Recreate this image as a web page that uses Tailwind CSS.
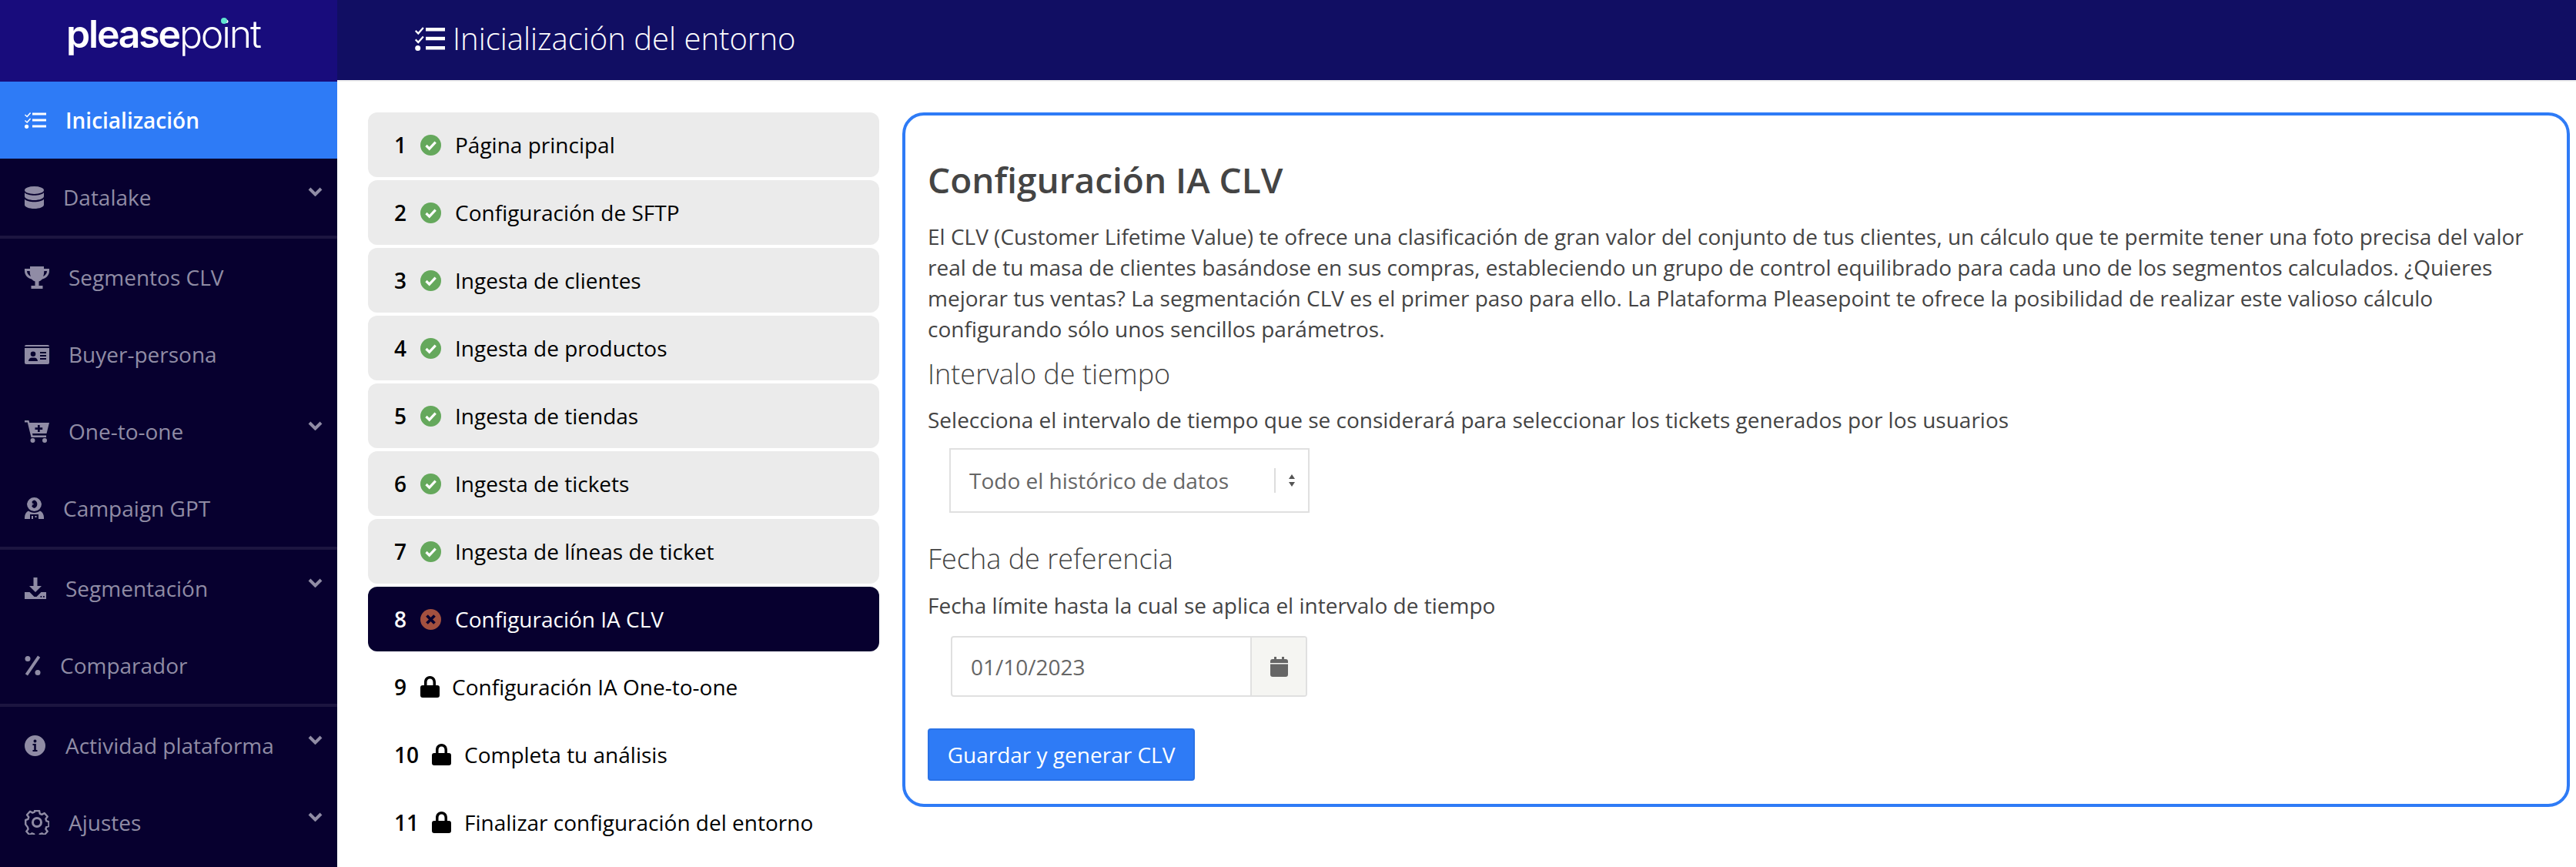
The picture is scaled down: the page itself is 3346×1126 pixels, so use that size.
<!DOCTYPE html>
<html lang="es">
<head>
<meta charset="utf-8">
<script src="https://cdn.jsdelivr.net/npm/@tailwindcss/browser@4"></script>
<title>Inicialización del entorno</title>
</head>
<body class="bg-white font-['Open_Sans',sans-serif]">
<div class="flex h-[1126px] w-[3346px] overflow-hidden">
  <!-- Sidebar -->
  <aside class="flex w-[438px] shrink-0 flex-col bg-[#07002f] text-[28px] leading-[40px] text-[#908ca5]">
    <div class="flex h-[106px] shrink-0 items-start bg-[#180c7c] pl-[86px] pt-[14px]">
      <div class="relative font-['Inter',sans-serif] text-[50px] leading-[60px] tracking-[-2.2px] text-white">
        <span class="font-semibold">please</span><span class="font-light">point</span>
        <span class="absolute left-[201px] top-[9px] h-[8px] w-[8px] rounded-full bg-[#5fe3cf]"></span>
      </div>
    </div>
    <a class="flex h-[100px] shrink-0 items-center gap-[25px] bg-[#2e7bf6] pl-[32px] font-semibold text-white">
      <svg class="w-[28px] h-[22px]" viewBox="0 0 28 22" fill="#fff"><path d="M1 3.500l2 2 4-4.500 1.200 1L3.200 7.600 0 4.600zM1 11l2 2 4-4.500 1.200 1L3.200 15 0 12z"/><circle cx="2.600" cy="19.300" r="2.600"/><rect x="10" y="1.500" width="18" height="3"/><rect x="10" y="9.500" width="18" height="3"/><rect x="10" y="17.500" width="18" height="3"/></svg>
      <span>Inicialización</span>
    </a>
    <a class="flex h-[100px] shrink-0 items-center gap-[25px] pl-[32px] pr-[19px]">
      <svg class="h-[29px] w-[25px]" viewBox="0 0 25 29" fill="currentColor"><ellipse cx="12.500" cy="5" rx="12.500" ry="5"/><path d="M0 8c2 2.500 7 3.800 12.500 3.800S23 10.500 25 8v5c0 2.700-5.600 5-12.500 5S0 15.700 0 13zM0 16.500c2 2.500 7 3.800 12.500 3.800S23 19 25 16.500V24c0 2.800-5.600 5-12.500 5S0 26.800 0 24z"/></svg>
      <span>Datalake</span>
      <svg class="ml-auto mb-[14px] h-[12px] w-[19px]" viewBox="0 0 19 12" fill="none" stroke="currentColor" stroke-width="4"><path d="M2 2l7.500 7.500L17 2"/></svg>
    </a>
    <div class="h-[4px] shrink-0 bg-[#1c1540]"></div>
    <a class="flex h-[100px] shrink-0 items-center gap-[25px] pl-[32px]">
      <svg class="h-[29px] w-[32px]" viewBox="0 0 32 29" fill="currentColor"><path d="M7 0h18v3h7v3c0 5.500-4.300 9.500-9 10.500-1.500 1.500-3 2.500-4.500 3V25h5v4H8.500v-4h5v-5.500c-1.500-.5-3-1.500-4.500-3C4.300 15.500 0 11.500 0 6V3h7zM3 6c0 3 2 5.500 5 7-1-2-1.200-4.500-1.300-7zM29 6h-3.700c-.1 2.500-.3 5-1.300 7 3-1.500 5-4 5-7z"/></svg>
      <span>Segmentos CLV</span>
    </a>
    <a class="flex h-[100px] shrink-0 items-center gap-[25px] pl-[32px]">
      <svg class="h-[25px] w-[32px]" viewBox="0 0 32 25" fill="currentColor"><path d="M2 0h28a2 2 0 0 1 2 2H0a2 2 0 0 1 2-2z"/><path fill-rule="evenodd" d="M0 4h32v19a2 2 0 0 1-2 2H2a2 2 0 0 1-2-2zM11 8.500a3.300 3.300 0 1 0 0 6.600 3.300 3.300 0 0 0 0-6.600zM5 21h12c0-2.500-2-4.500-4.500-4.500h-3C7 16.500 5 18.500 5 21zM20 9h8v2h-8zM20 13h8v2h-8zM20 17h8v2h-8z"/></svg>
      <span>Buyer-persona</span>
    </a>
    <a class="flex h-[100px] shrink-0 items-center gap-[25px] pl-[32px] pr-[19px]">
      <svg class="h-[29px] w-[32px]" viewBox="0 0 32 29" fill="currentColor"><path fill-rule="evenodd" d="M0 0h5.500l.8 3H32l-3.500 14H10l.6 2.500H28V22H8.500L3.700 2.500H0zM17 6v3.300h-3.500v2.600H17v3.200h2.700v-3.200h3.500V9.300h-3.500V6z"/><circle cx="10.500" cy="26" r="3"/><circle cx="26" cy="26" r="3"/></svg>
      <span>One-to-one</span>
      <svg class="ml-auto mb-[14px] h-[12px] w-[19px]" viewBox="0 0 19 12" fill="none" stroke="currentColor" stroke-width="4"><path d="M2 2l7.500 7.500L17 2"/></svg>
    </a>
    <a class="flex h-[100px] shrink-0 items-center gap-[25px] pl-[32px]">
      <svg class="h-[28px] w-[25px]" viewBox="0 0 25 28" fill="currentColor"><path fill-rule="evenodd" d="M12.500 0a9.500 9.500 0 0 1 9.500 8.500 9.500 9.500 0 0 1-19 0A9.500 9.500 0 0 1 12.500 0zM12.500 3.500a5.500 5.500 0 0 0 0 10.500 5.500 5.500 0 0 0 0-10.500z"/><path d="M7 8h1.700V6.300h1.200V8h1.700v1.200H9.900v1.700H8.700V9.200H7z"/><path fill-rule="evenodd" d="M5 17.500c2 1.600 4.700 2.500 7.500 2.500s5.500-.9 7.500-2.500c3 1.300 5 4.500 5 8.500v2H18v-6H7v6H0v-2c0-4 2-7.200 5-8.500zM9 24h2v4H9zM13.500 24h2v2h-2z"/></svg>
      <span>Campaign GPT</span>
    </a>
    <div class="h-[4px] shrink-0 bg-[#1c1540]"></div>
    <a class="flex h-[100px] shrink-0 items-center gap-[25px] pl-[32px] pr-[19px]">
      <svg class="h-[28px] w-[28px]" viewBox="0 0 28 28" fill="currentColor"><path d="M11.500 0h5v11H22l-8 8-8-8h5.500z"/><path fill-rule="evenodd" d="M0 19h6.500l6 6h3l6-6H28v9H0zM20.500 24v1.800h1.800V24zM24 24v1.800h1.800V24z"/></svg>
      <span>Segmentación</span>
      <svg class="ml-auto mb-[14px] h-[12px] w-[19px]" viewBox="0 0 19 12" fill="none" stroke="currentColor" stroke-width="4"><path d="M2 2l7.500 7.500L17 2"/></svg>
    </a>
    <a class="flex h-[100px] shrink-0 items-center gap-[25px] pl-[32px]">
      <svg class="h-[27px] w-[21px]" viewBox="0 0 21 27" fill="currentColor"><circle cx="4" cy="4.500" r="3.500"/><circle cx="17" cy="22.500" r="3.500"/><path d="M17 .5l3.200 2.300L4 26.500.8 24.200z"/></svg>
      <span>Comparador</span>
    </a>
    <div class="h-[4px] shrink-0 bg-[#1c1540]"></div>
    <a class="flex h-[100px] shrink-0 items-center gap-[25px] pl-[32px] pr-[19px]">
      <svg class="h-[27px] w-[27px] mr-[1px]" viewBox="0 0 27 27" fill="currentColor"><path fill-rule="evenodd" d="M13.500 0a13.500 13.500 0 1 1 0 27 13.500 13.500 0 0 1 0-27zM13.500 5.500a2 2 0 1 0 0 4 2 2 0 0 0 0-4zM10.500 11v2h1.700v6h-1.700v2h6v-2h-1.700v-8z"/></svg>
      <span>Actividad plataforma</span>
      <svg class="ml-auto mb-[14px] h-[12px] w-[19px]" viewBox="0 0 19 12" fill="none" stroke="currentColor" stroke-width="4"><path d="M2 2l7.500 7.500L17 2"/></svg>
    </a>
    <a class="flex h-[100px] shrink-0 items-center gap-[25px] pl-[32px] pr-[19px]">
      <svg class="h-[32px] w-[32px]" viewBox="0 0 32 32" fill="none" stroke="currentColor" stroke-width="2.400" stroke-linejoin="round"><path d="M13 1.500h6l.8 3.700 2.600 1.100 3.300-1.900 4 4.500-2.300 3 .8 2.600 3.300 1.200v5.600l-3.300 1.200-.8 2.600 2.300 3-4 4.500-3.300-1.900-2.600 1.100-.8 3.300h-6l-.8-3.300-2.600-1.100-3.300 1.900-4-4.500 2.300-3-.8-2.600L1.200 19v-5.600l3.300-1.200.8-2.600-2.300-3 4-4.500 3.300 1.900 2.600-1.100z" transform="translate(0 -.4)"/><circle cx="16" cy="16" r="5.500" stroke-width="3"/></svg>
      <span>Ajustes</span>
      <svg class="ml-auto mb-[14px] h-[12px] w-[19px]" viewBox="0 0 19 12" fill="none" stroke="currentColor" stroke-width="4"><path d="M2 2l7.500 7.500L17 2"/></svg>
    </a>
  </aside>

  <!-- Right side -->
  <div class="flex min-w-0 flex-1 flex-col">
    <header class="flex h-[106px] shrink-0 items-center gap-[10px] border-b-2 border-[#f0f0f0] bg-[#110e63] pb-[4px] pl-[101px] text-[40px] font-light leading-[48px] text-white">
      <svg class="h-[32px] w-[39px]" viewBox="0 0 39 32" fill="#fff"><path d="M1.500 5l2.700 2.800L10 1.300l1.700 1.500-7.400 8.400L0 6.800zM1.500 16.500l2.700 2.800 5.800-6.500 1.700 1.500-7.400 8.400L0 18.300z"/><circle cx="3.700" cy="28.500" r="3.500"/><rect x="14" y="2" width="25" height="4.500"/><rect x="14" y="13.800" width="25" height="4.500"/><rect x="14" y="26" width="25" height="4.500"/></svg>
      <span>Inicialización del entorno</span>
    </header>

    <main class="flex items-start gap-[30px] pl-[40px] pr-[8px] pt-[40px]">
      <!-- Steps -->
      <ol class="flex w-[664px] shrink-0 flex-col gap-[4px] text-[28px] leading-[40px] text-black">
        <li class="flex h-[84px] items-center rounded-[12px] bg-[#ebebeb] pl-[34px]"><span class="w-[34px] font-semibold">1</span><svg class="h-[27px] w-[27px]" viewBox="0 0 27 27"><circle cx="13.500" cy="13.500" r="13.500" fill="#65a85c"/><path d="M7.500 14l4.200 4.200 8-8.500" fill="none" stroke="#fff" stroke-width="3.200"/></svg><span class="ml-[18px]">Página principal</span></li>
        <li class="flex h-[84px] items-center rounded-[12px] bg-[#ebebeb] pl-[34px]"><span class="w-[34px] font-semibold">2</span><svg class="h-[27px] w-[27px]" viewBox="0 0 27 27"><circle cx="13.500" cy="13.500" r="13.500" fill="#65a85c"/><path d="M7.500 14l4.200 4.200 8-8.500" fill="none" stroke="#fff" stroke-width="3.200"/></svg><span class="ml-[18px]">Configuración de SFTP</span></li>
        <li class="flex h-[84px] items-center rounded-[12px] bg-[#ebebeb] pl-[34px]"><span class="w-[34px] font-semibold">3</span><svg class="h-[27px] w-[27px]" viewBox="0 0 27 27"><circle cx="13.500" cy="13.500" r="13.500" fill="#65a85c"/><path d="M7.500 14l4.200 4.200 8-8.500" fill="none" stroke="#fff" stroke-width="3.200"/></svg><span class="ml-[18px]">Ingesta de clientes</span></li>
        <li class="flex h-[84px] items-center rounded-[12px] bg-[#ebebeb] pl-[34px]"><span class="w-[34px] font-semibold">4</span><svg class="h-[27px] w-[27px]" viewBox="0 0 27 27"><circle cx="13.500" cy="13.500" r="13.500" fill="#65a85c"/><path d="M7.500 14l4.200 4.200 8-8.500" fill="none" stroke="#fff" stroke-width="3.200"/></svg><span class="ml-[18px]">Ingesta de productos</span></li>
        <li class="flex h-[84px] items-center rounded-[12px] bg-[#ebebeb] pl-[34px]"><span class="w-[34px] font-semibold">5</span><svg class="h-[27px] w-[27px]" viewBox="0 0 27 27"><circle cx="13.500" cy="13.500" r="13.500" fill="#65a85c"/><path d="M7.500 14l4.200 4.200 8-8.500" fill="none" stroke="#fff" stroke-width="3.200"/></svg><span class="ml-[18px]">Ingesta de tiendas</span></li>
        <li class="flex h-[84px] items-center rounded-[12px] bg-[#ebebeb] pl-[34px]"><span class="w-[34px] font-semibold">6</span><svg class="h-[27px] w-[27px]" viewBox="0 0 27 27"><circle cx="13.500" cy="13.500" r="13.500" fill="#65a85c"/><path d="M7.500 14l4.200 4.200 8-8.500" fill="none" stroke="#fff" stroke-width="3.200"/></svg><span class="ml-[18px]">Ingesta de tickets</span></li>
        <li class="flex h-[84px] items-center rounded-[12px] bg-[#ebebeb] pl-[34px]"><span class="w-[34px] font-semibold">7</span><svg class="h-[27px] w-[27px]" viewBox="0 0 27 27"><circle cx="13.500" cy="13.500" r="13.500" fill="#65a85c"/><path d="M7.500 14l4.200 4.200 8-8.500" fill="none" stroke="#fff" stroke-width="3.200"/></svg><span class="ml-[18px]">Ingesta de líneas de ticket</span></li>
        <li class="flex h-[84px] items-center rounded-[12px] bg-[#07002f] pl-[34px] text-white"><span class="w-[34px] font-semibold">8</span><svg class="h-[27px] w-[27px]" viewBox="0 0 27 27"><circle cx="13.500" cy="13.500" r="13.500" fill="#a3503f"/><path d="M8.500 8.500l10 10M18.500 8.500l-10 10" fill="none" stroke="#07002f" stroke-width="3.800"/></svg><span class="ml-[18px]">Configuración IA CLV</span></li>
        <li class="flex h-[84px] items-center pl-[34px]"><span class="w-[34px] font-semibold">9</span><svg class="h-[28px] w-[25px]" viewBox="0 0 25 28" fill="#000"><path fill-rule="evenodd" d="M12.500 0C17.500 0 20 3.800 20 8v4h2a3 3 0 0 1 3 3v10a3 3 0 0 1-3 3H3a3 3 0 0 1-3-3V15a3 3 0 0 1 3-3h2V8c0-4.200 2.500-8 7.500-8zM12.500 3.500C10 3.500 8.500 5.500 8.500 8v4h8V8c0-2.500-1.500-4.500-4-4.500z"/></svg><span class="ml-[16px]">Configuración IA One-to-one</span></li>
        <li class="flex h-[84px] items-center pl-[34px]"><span class="w-[49px] font-semibold">10</span><svg class="h-[28px] w-[25px]" viewBox="0 0 25 28" fill="#000"><path fill-rule="evenodd" d="M12.500 0C17.500 0 20 3.800 20 8v4h2a3 3 0 0 1 3 3v10a3 3 0 0 1-3 3H3a3 3 0 0 1-3-3V15a3 3 0 0 1 3-3h2V8c0-4.200 2.500-8 7.500-8zM12.500 3.500C10 3.500 8.500 5.500 8.500 8v4h8V8c0-2.500-1.500-4.500-4-4.500z"/></svg><span class="ml-[17px]">Completa tu análisis</span></li>
        <li class="flex h-[84px] items-center pl-[34px]"><span class="w-[49px] font-semibold">11</span><svg class="h-[28px] w-[25px]" viewBox="0 0 25 28" fill="#000"><path fill-rule="evenodd" d="M12.500 0C17.500 0 20 3.800 20 8v4h2a3 3 0 0 1 3 3v10a3 3 0 0 1-3 3H3a3 3 0 0 1-3-3V15a3 3 0 0 1 3-3h2V8c0-4.200 2.500-8 7.500-8zM12.500 3.500C10 3.500 8.500 5.500 8.500 8v4h8V8c0-2.500-1.500-4.500-4-4.500z"/></svg><span class="ml-[17px]">Finalizar configuración del entorno</span></li>
      </ol>

      <!-- Card -->
      <section class="min-w-0 flex-1 rounded-[28px] border-4 border-[#2e7bf6] pb-[30px] pl-[29px] pr-[29px] pt-[59px] text-[28px] leading-[40px] text-[#444]">
        <h2 class="text-[46px] font-semibold leading-[48px]">Configuración IA CLV</h2>
        <p class="mt-[30px]">El CLV (Customer Lifetime Value) te ofrece una clasificación de gran valor del conjunto de tus clientes, un cálculo que te permite tener una foto precisa del valor<br>real de tu masa de clientes basándose en sus compras, estableciendo un grupo de control equilibrado para cada uno de los segmentos calculados. ¿Quieres<br>mejorar tus ventas? La segmentación CLV es el primer paso para ello. La Plataforma Pleasepoint te ofrece la posibilidad de realizar este valioso cálculo<br>configurando sólo unos sencillos parámetros.</p>
        <h3 class="mt-[17px] text-[36px] font-light leading-[44px]">Intervalo de tiempo</h3>
        <p class="mt-[17px]">Selecciona el intervalo de tiempo que se considerará para seleccionar los tickets generados por los usuarios</p>
        <div class="ml-[28px] mt-[17px] flex h-[84px] w-[468px] items-center border-2 border-[#e0e0e0] pl-[24px] text-[#666]">
          <span>Todo el histórico de datos</span>
          <div class="ml-auto flex h-[32px] w-[44px] items-center justify-center border-l-2 border-[#ddd]">
            <svg class="h-[16px] w-[8px]" viewBox="0 0 8 16" fill="#555"><path d="M4 0l4 6H0zM4 16L0 10h8z"/></svg>
          </div>
        </div>
        <h3 class="mt-[38px] text-[36px] font-light leading-[44px]">Fecha de referencia</h3>
        <p class="mt-[18px]">Fecha límite hasta la cual se aplica el intervalo de tiempo</p>
        <div class="ml-[30px] mt-[20px] flex h-[79px] w-[463px] overflow-hidden rounded-[4px] border-2 border-[#e0e0e0] text-[#666]">
          <div class="flex flex-1 items-center pl-[24px]">01/10/2023</div>
          <div class="flex w-[72px] items-center justify-center border-l-2 border-[#e0e0e0] bg-[#f5f5f2]">
            <svg class="h-[26px] w-[23px]" viewBox="0 0 23 26" fill="#666"><path d="M5 0h3v3h7V0h3v3h2a3 3 0 0 1 3 3v2H0V6a3 3 0 0 1 3-3h2zM0 9.500h23V23a3 3 0 0 1-3 3H3a3 3 0 0 1-3-3z"/></svg>
          </div>
        </div>
        <button class="mt-[41px] block h-[68px] w-[347px] rounded-[4px] border-2 border-[#2a72e6] bg-[#2e7bf6] text-center text-white">Guardar y generar CLV</button>
      </section>
    </main>
  </div>
</div>
</body>
</html>
